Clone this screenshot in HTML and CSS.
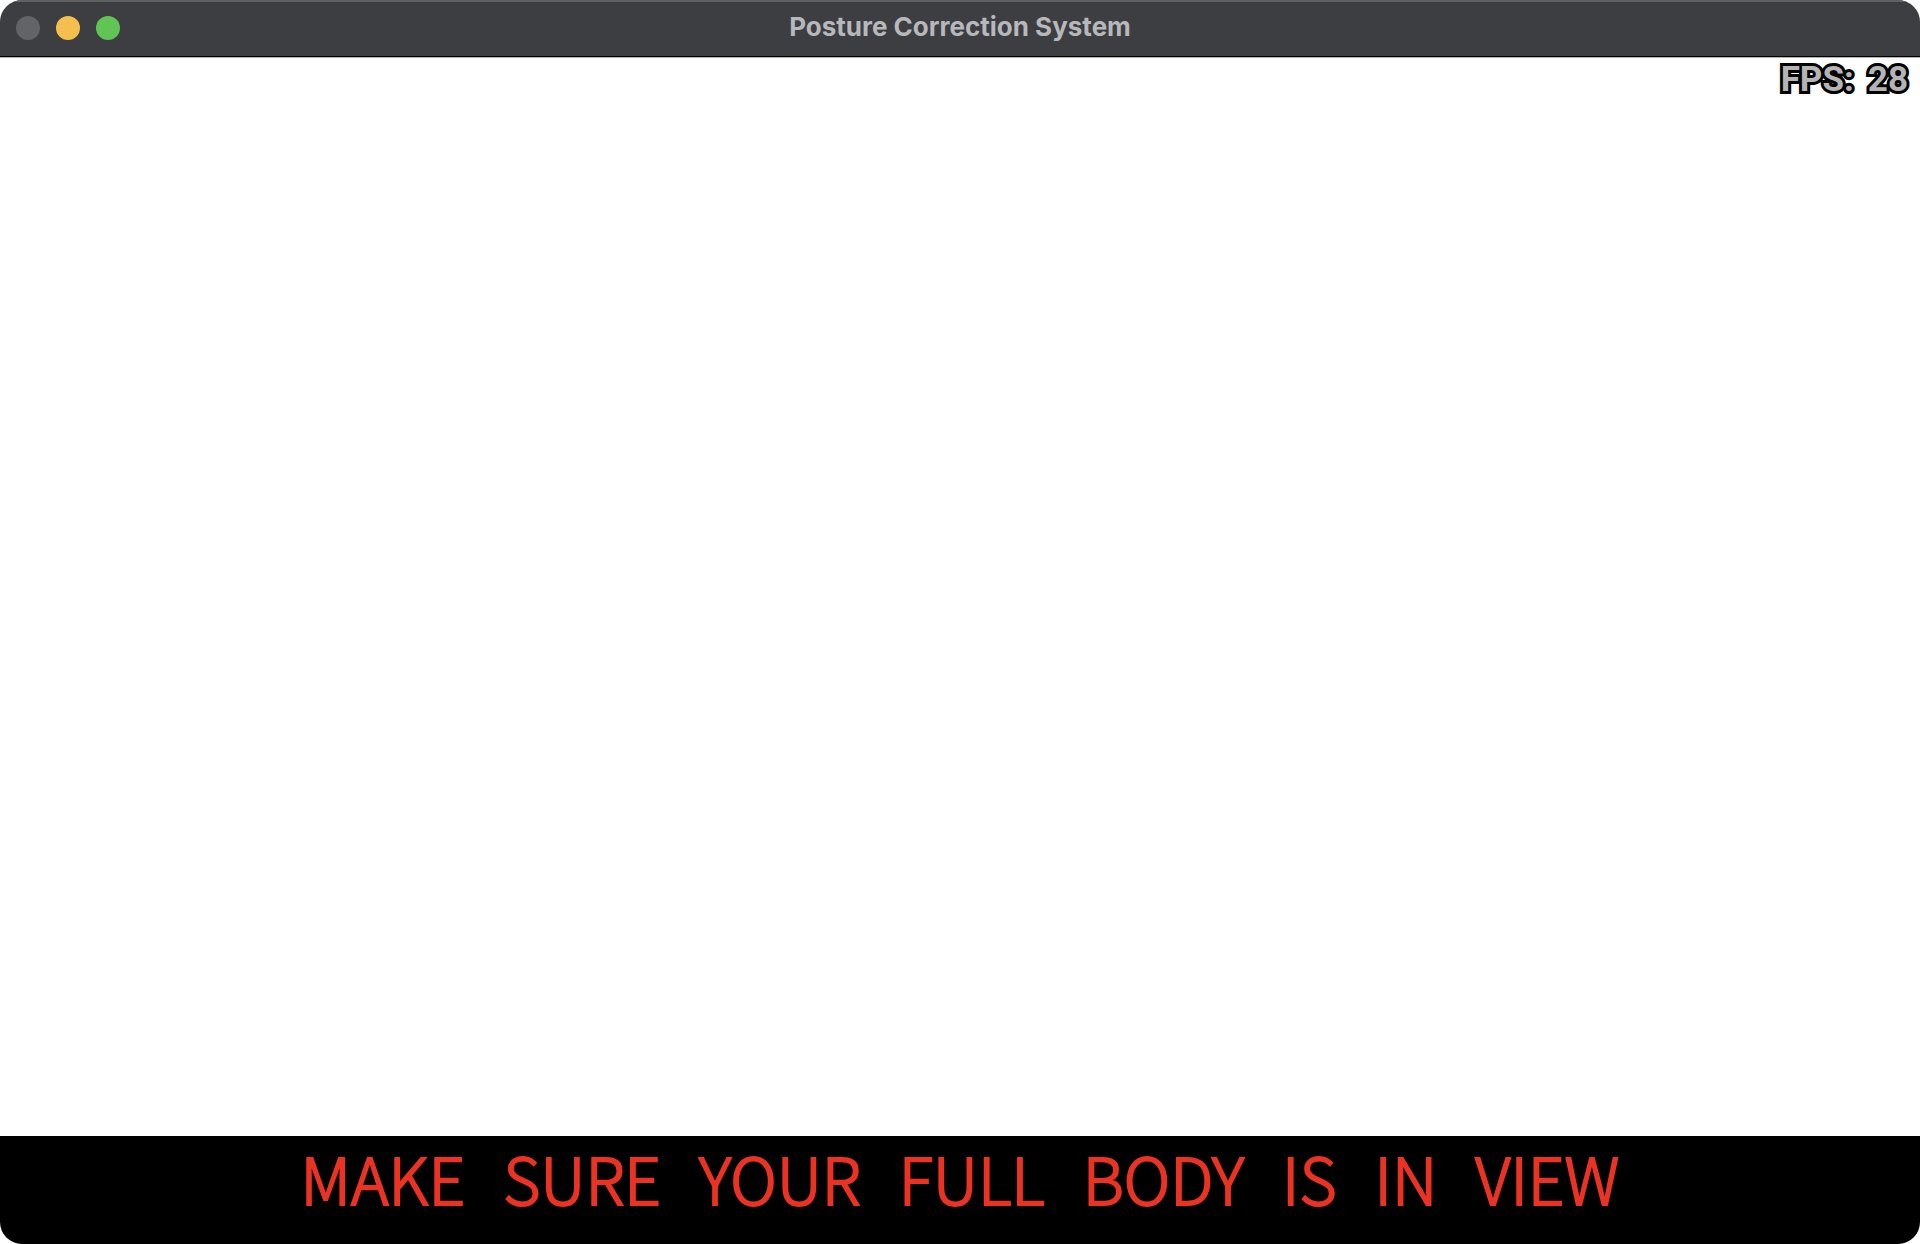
FILE: index.html
```html
<!DOCTYPE html>
<html lang="en">
<head>
<meta charset="utf-8">
<title>Posture Correction System</title>
<link rel="stylesheet" href="styles.css">
</head>
<body>
<div class="window">
  <header class="titlebar">
    <div class="controls">
      <button class="control close" type="button" aria-label="Close"></button>
      <button class="control minimize" type="button" aria-label="Minimize"></button>
      <button class="control zoom" type="button" aria-label="Zoom"></button>
    </div>
    <h1 class="title">Posture Correction System</h1>
  </header>
  <main class="view">
    <p class="fps"><span>FPS:</span> <span>28</span></p>
  </main>
  <footer class="message">
    <span>MAKE</span> <span>SURE</span> <span>YOUR</span> <span>FULL</span> <span>BODY</span> <span>IS</span> <span>IN</span> <span>VIEW</span>
  </footer>
</div>
</body>
</html>
```
FILE: styles.css
```css
* {
  box-sizing: border-box;
}

body {
  margin: 0;
  background: #fff;
}

.window {
  display: flex;
  flex-direction: column;
  min-height: 100vh;
  border-radius: 22px;
  overflow: hidden;
}

.titlebar {
  display: grid;
  grid-template-columns: 1fr auto 1fr;
  align-items: center;
  height: 58px;
  padding: 0 16px 1px;
  background: #3d3e42;
  border-bottom: 1px solid #b4b4b4;
  box-shadow: inset 0 2px #5f6063, inset 0 -1px #000;
}

.controls {
  display: flex;
  gap: 16px;
}

.control {
  width: 24px;
  height: 24px;
  padding: 0;
  border: 0;
  border-radius: 50%;
}

.close {
  background: #636467;
}

.minimize {
  background: #f5bf4f;
}

.zoom {
  background: #61c554;
}

.title {
  margin: 0;
  padding-bottom: 2px;
  color: #b7b8bb;
  font: 700 26px/32px Inter, "Liberation Sans", sans-serif;
}

.view {
  display: flex;
  flex: 1;
  justify-content: flex-end;
  align-items: flex-start;
  background: #fff;
}

.fps {
  display: flex;
  gap: 14px;
  margin: 0;
  padding: 0 12px;
  color: #b4b4b4;
  font: 700 35px/44px Roboto, "Liberation Sans", sans-serif;
  -webkit-text-stroke: 6px #000;
  paint-order: stroke fill;
  stroke-linejoin: round;
}

.message {
  display: flex;
  justify-content: center;
  gap: 38px;
  height: 108px;
  background: #000;
  color: #eb3323;
  font: 300 64px/82px "Noto Sans CJK JP", "Noto Sans", sans-serif;
  -webkit-text-stroke: 2px #eb3323;
  stroke-linejoin: round;
}
```
